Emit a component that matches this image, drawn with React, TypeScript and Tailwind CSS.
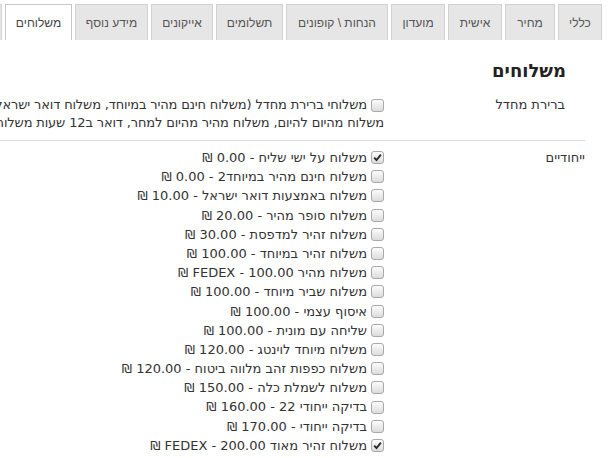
import { useState } from 'react';

type Tab = { label: string; width: string };

const tabs: Tab[] = [
  { label: 'כללי', width: 'w-[44px]' },
  { label: 'מחיר', width: 'w-[50px]' },
  { label: 'אישית', width: 'w-[54px]' },
  { label: 'מועדון', width: 'w-[54px]' },
  { label: 'הנחות \\ קופונים', width: 'w-[102px]' },
  { label: 'תשלומים', width: 'w-[67px]' },
  { label: 'אייקונים', width: 'w-[62px]' },
  { label: 'מידע נוסף', width: 'w-[73px]' },
  { label: 'משלוחים', width: 'w-[67px]' },
  { label: 'הגדרות', width: 'w-[70px]' },
];

const shipping = [
  { name: 'משלוח על ישי שליח - 0.00 ₪', checked: true },
  { name: 'משלוח חינם מהיר במיוחד2 - 0.00 ₪', checked: false },
  { name: 'משלוח באמצעות דואר ישראל - 10.00 ₪', checked: false },
  { name: 'משלוח סופר מהיר - 20.00 ₪', checked: false },
  { name: 'משלוח זהיר למדפסת - 30.00 ₪', checked: false },
  { name: 'משלוח זהיר במיוחד - 100.00 ₪', checked: false },
  { name: 'משלוח מהיר FEDEX - 100.00 ₪', checked: false },
  { name: 'משלוח שביר מיוחד - 100.00 ₪', checked: false },
  { name: 'איסוף עצמי - 100.00 ₪', checked: false },
  { name: 'שליחה עם מונית - 100.00 ₪', checked: false },
  { name: 'משלוח מיוחד לוינטג - 120.00 ₪', checked: false },
  { name: 'משלוח כפפות זהב מלווה ביטוח - 120.00 ₪', checked: false },
  { name: 'משלוח לשמלת כלה - 150.00 ₪', checked: false },
  { name: 'בדיקה ייחודי 22 - 160.00 ₪', checked: false },
  { name: 'בדיקה ייחודי - 170.00 ₪', checked: false },
  { name: 'משלוח זהיר מאוד FEDEX - 200.00 ₪', checked: true },
  { name: 'משלוח בינלאומי - 250.00 ₪', checked: false },
];

function Checkbox({ checked, onChange }: { checked: boolean; onChange: () => void }) {
  return (
    <span
      onClick={onChange}
      className="inline-flex w-[13px] h-[13px] shrink-0 items-center justify-center rounded-[3px] border border-[#a9a9a9] bg-gradient-to-b from-[#fcfcfc] to-[#dcdcdc] cursor-pointer"
    >
      {checked && (
        <svg width="9" height="9" viewBox="0 0 9 9">
          <path d="M1.2 4.6 L3.5 7 L7.9 1.6" fill="none" stroke="#2b2b2b" strokeWidth="1.9" />
        </svg>
      )}
    </span>
  );
}

export default function App() {
  const [active, setActive] = useState(8);
  const [defaults, setDefaults] = useState(false);
  const [checks, setChecks] = useState(shipping.map((s) => s.checked));

  const toggle = (i: number) => setChecks(checks.map((c, idx) => (idx === i ? !c : c)));

  return (
    <div dir="rtl" className="w-[608px] h-[458px] overflow-hidden bg-white text-[#333] font-['DejaVu_Sans',sans-serif]">
      {/* Tabs */}
      <div className="flex gap-[3px] pt-1 pr-[6px] h-[40px] overflow-hidden">
        {tabs.map((tab, i) => (
          <button
            key={tab.label}
            onClick={() => setActive(i)}
            className={`${tab.width} h-[36px] shrink-0 flex items-center justify-center border border-b-0 text-[12px] font-['Liberation_Sans',sans-serif] whitespace-nowrap ${
              active === i ? 'bg-white border-[#c8c8c8] text-[#444]' : 'bg-[#e6e6e6] border-[#d2d2d2] text-[#555]'
            }`}
          >
            {tab.label}
          </button>
        ))}
      </div>

      <h2 className="mt-[19px] pr-[42px] text-[18px] leading-[24px] font-bold text-[#222]">משלוחים</h2>

      {/* Default shipping */}
      <div className="flex mt-[13px] mr-[23px] pb-[8px] border-b border-[#dddddd]">
        <div className="w-[201px] shrink-0 pr-[20px] text-[13px] leading-[18px]">ברירת מחדל</div>
        <div className="w-[440px] shrink-0 text-[13px] leading-[18px] whitespace-nowrap tracking-[-0.15px]">
          <div className="flex items-center gap-[4px]">
            <Checkbox checked={defaults} onChange={() => setDefaults(!defaults)} />
            <span>משלוחי ברירת מחדל (משלוח חינם מהיר במיוחד, משלוח דואר ישראל, משלוח שליחים</span>
          </div>
          <div>משלוח מהיום להיום, משלוח מהיר מהיום למחר, דואר ב12 שעות משלוח, ועוד)</div>
        </div>
      </div>

      {/* Unique shipping */}
      <div className="flex pt-[7px] mr-[23px]">
        <div className="w-[201px] shrink-0 text-[13px] leading-[19.2px]">ייחודיים</div>
        <div className="flex flex-col text-[13px] leading-[19.2px] whitespace-nowrap">
          {shipping.map((s, i) => (
            <label key={s.name} className="flex items-center gap-[4px] h-[19.2px]">
              <Checkbox checked={checks[i]} onChange={() => toggle(i)} />
              <span>{s.name}</span>
            </label>
          ))}
        </div>
      </div>
    </div>
  );
}
